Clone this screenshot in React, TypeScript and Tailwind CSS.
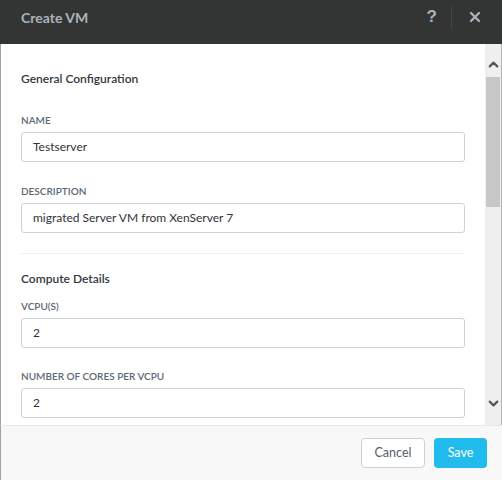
import { ChevronUp, ChevronDown, X } from 'lucide-react';

const FONT = { fontFamily: 'Lato, "Open Sans", "Liberation Sans", sans-serif' };

function Field({ label, value }: { label: string; value: string }) {
  return (
    <div>
      <div className="text-[10px] leading-[12px] font-semibold text-[#5d6873] uppercase">{label}</div>
      <div className="mt-[6px] h-[30px] rounded-[3px] border border-[#cfd3d6] bg-white flex items-center px-[11px] text-[12px] text-[#2f3337]">
        {value}
      </div>
    </div>
  );
}

export default function App() {
  return (
    <div className="w-[502px] h-[480px] flex flex-col bg-white overflow-hidden" style={FONT}>
      {/* Header */}
      <div className="h-[44px] shrink-0 bg-[#333535] flex items-start pt-[6px] pl-[21px] pr-[19px]">
        <div className="h-[22px] flex items-center text-[14px] font-bold text-[#aab3bc]">Create VM</div>
        <div className="ml-auto flex items-center h-[22px]">
          <span className="text-[17px] font-black text-[#aab3bc] mr-[14px]" style={{ fontFamily: '"Liberation Sans", sans-serif' }}>?</span>
          <div className="w-px h-[22px] bg-[#454747]" />
          <X className="ml-[15px] h-[16px] w-[16px] text-[#aab3bc]" strokeWidth={3.5} aria-hidden="true" />
        </div>
      </div>

      {/* Body */}
      <div className="flex-1 flex border-l border-[#a3a3a3] border-r border-r-[#b5b5b5] min-h-0">
        <div className="flex-1 overflow-hidden px-[20px] pt-[27px]">
          <div className="text-[12px] leading-[16px] font-semibold text-[#33383d]">General Configuration</div>
          <div className="mt-[27px]">
            <Field label="Name" value="Testserver" />
          </div>
          <div className="mt-[23px]">
            <Field label="Description" value="migrated Server VM from XenServer 7" />
          </div>
          <div className="mt-[20px] h-px bg-[#eceeef]" />
          <div className="mt-[17px] text-[12px] leading-[16px] font-semibold text-[#33383d]">Compute Details</div>
          <div className="mt-[13px]">
            <Field label="vCPU(s)" value="2" />
          </div>
          <div className="mt-[22px]">
            <Field label="Number of cores per vCPU" value="2" />
          </div>
        </div>

        {/* Scrollbar */}
        <div className="w-[16px] shrink-0 bg-[#efefef] flex flex-col items-center">
          <ChevronUp className="mt-[13px] h-[15px] w-[15px] text-[#555]" strokeWidth={3.5} aria-hidden="true" />
          <div className="mt-[5px] w-[14px] h-[130px] bg-[#c7c7c7]" />
          <ChevronDown className="mt-auto mb-[14px] h-[15px] w-[15px] text-[#555]" strokeWidth={3.5} aria-hidden="true" />
        </div>
      </div>

      {/* Footer */}
      <div className="h-[55px] shrink-0 bg-[#f8f8f8] border-t border-[#e6e8e9] border-l border-l-[#a3a3a3] flex items-start justify-end pt-[12px] pr-[15px] gap-[9px]">
        <button className="h-[30px] w-[64px] rounded-[4px] border border-[#cdd0d3] bg-white text-[12.5px] text-[#56606a]">
          Cancel
        </button>
        <button className="h-[30px] w-[53px] rounded-[4px] bg-[#22bbee] text-[12.5px] text-white">
          Save
        </button>
      </div>
    </div>
  );
}
